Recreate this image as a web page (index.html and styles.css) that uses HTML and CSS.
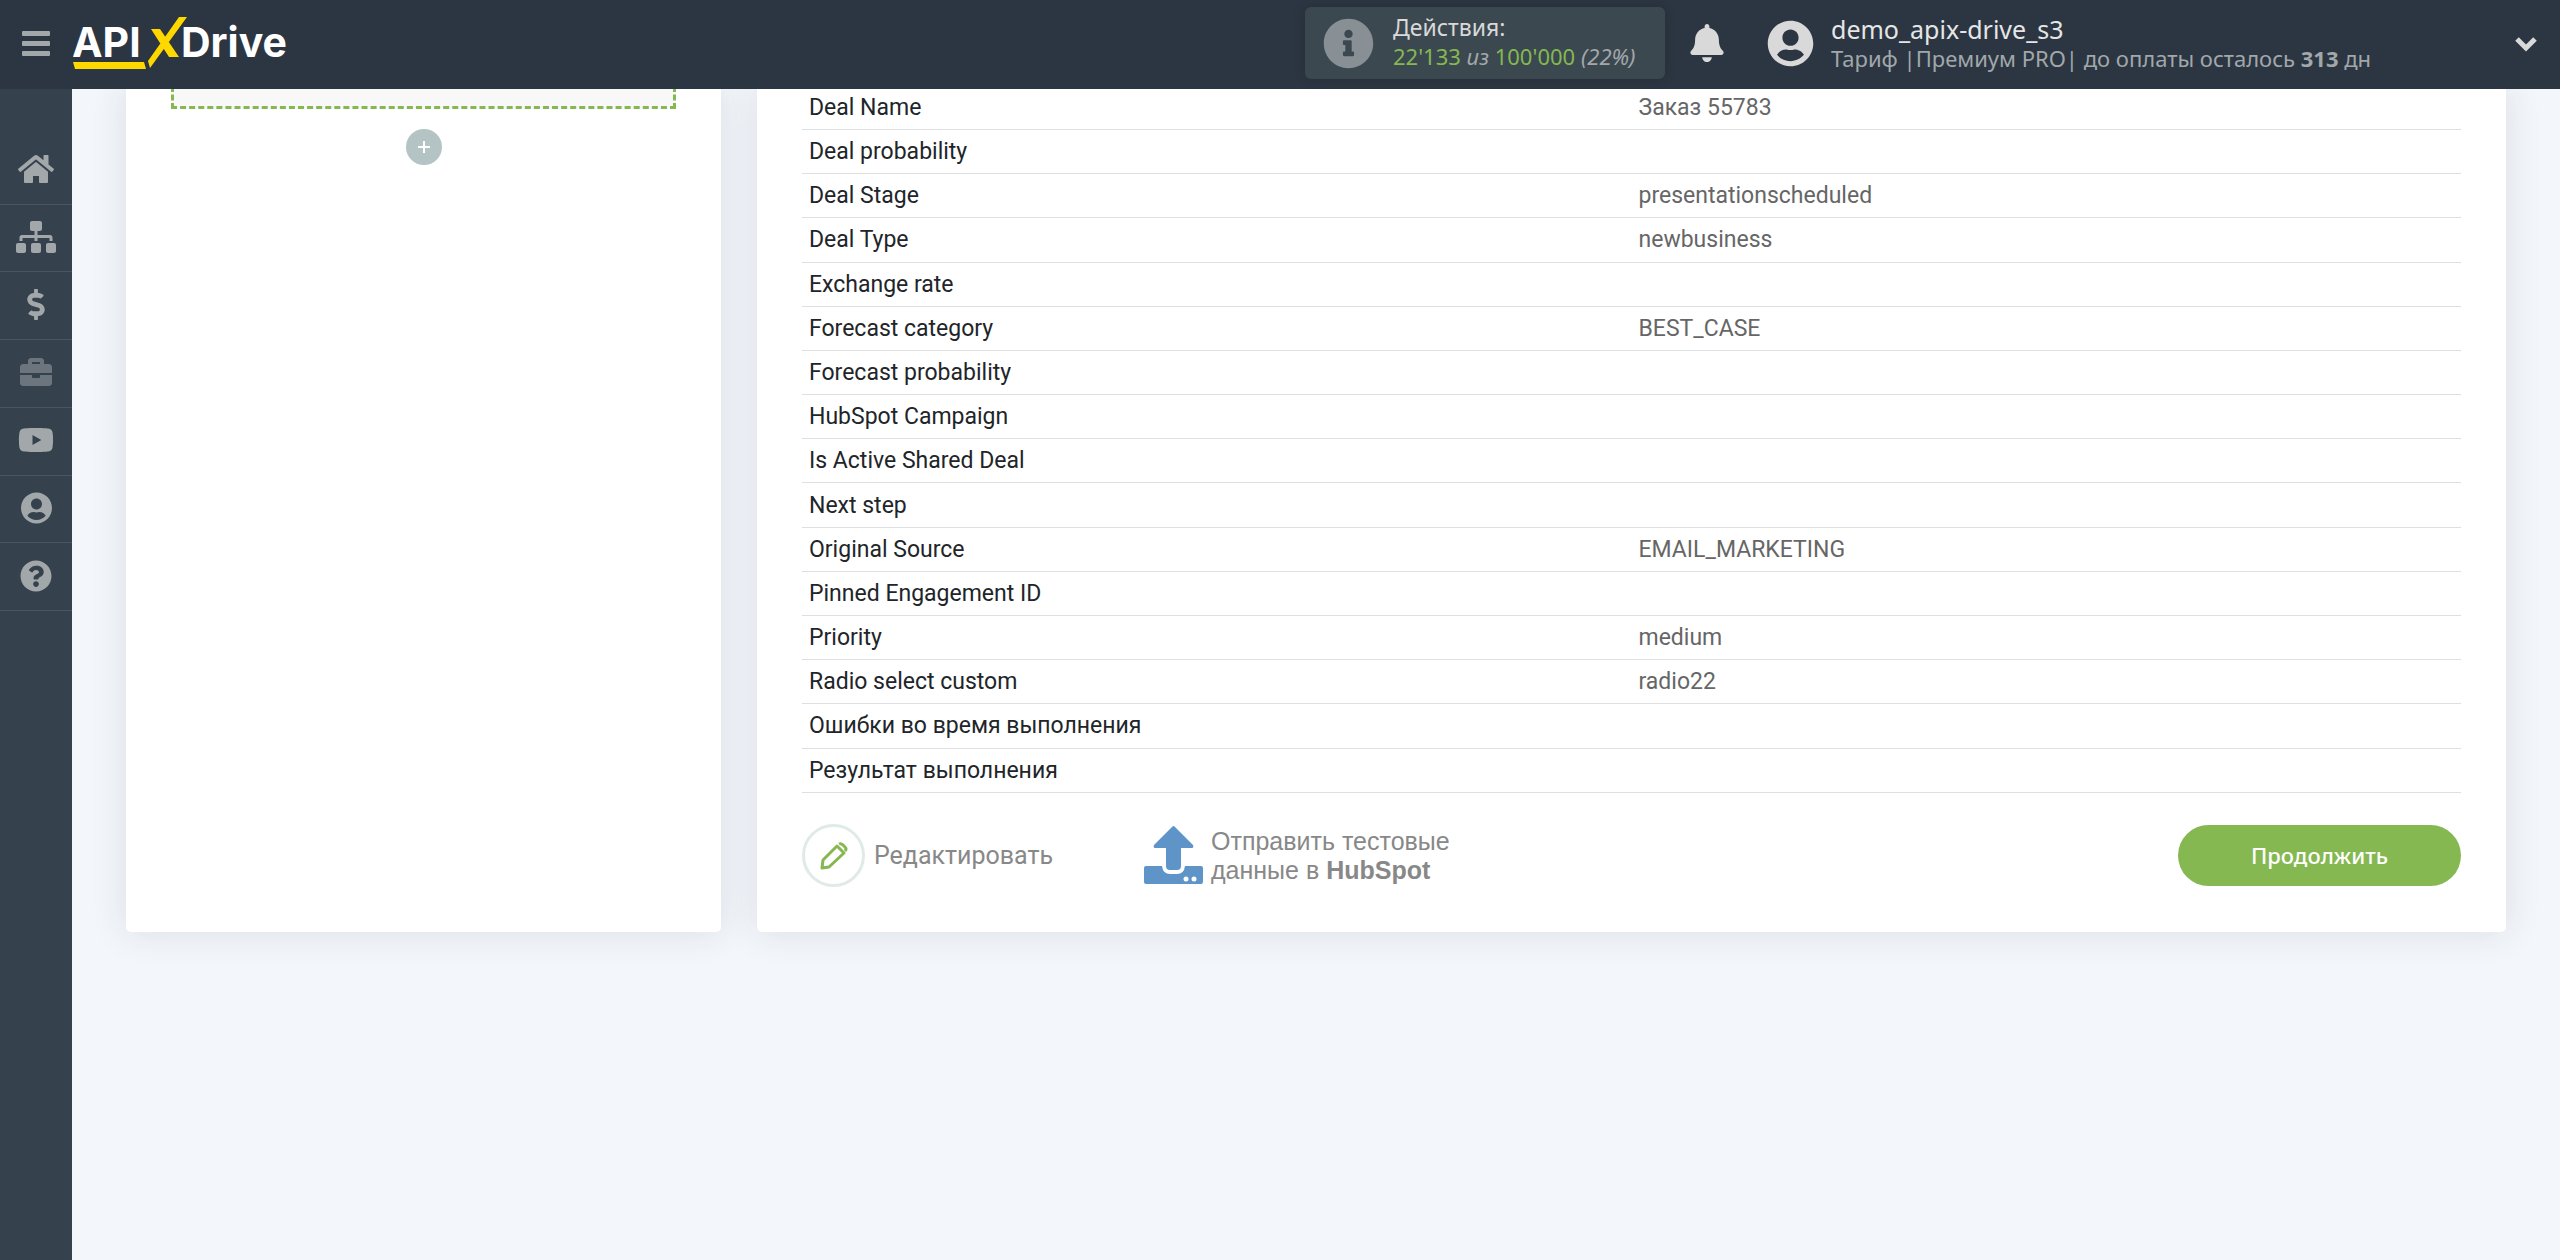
FILE: index.html
```html
<!DOCTYPE html>
<html lang="ru">
<head>
<meta charset="utf-8">
<meta name="viewport" content="width=device-width, initial-scale=1">
<title>ApiX-Drive</title>
<link rel="stylesheet" href="styles.css">
</head>
<body>
<header class="topbar">
  <button class="menu-btn" type="button" aria-label="Меню">
    <svg width="28" height="25" viewBox="0 0 28 25"><path d="M1 0h26a1 1 0 0 1 1 1v3a1 1 0 0 1-1 1H1a1 1 0 0 1-1-1V1a1 1 0 0 1 1-1zM1 10h26a1 1 0 0 1 1 1v3a1 1 0 0 1-1 1H1a1 1 0 0 1-1-1v-3a1 1 0 0 1 1-1zM1 20h26a1 1 0 0 1 1 1v3a1 1 0 0 1-1 1H1a1 1 0 0 1-1-1v-3a1 1 0 0 1 1-1z" fill="#a2a7aa"/></svg>
  </button>
  <a class="logo" href="#" aria-label="APIX Drive">
    <svg width="222" height="54" viewBox="0 0 222 54">
      <text class="logo-text" x="-1" y="41">API</text>
      <text class="logo-text" x="108" y="41">Drive</text>
      <path d="M0 46h71l2 7H2zM106 1h8L77 52l-2-7zM78 13h9l19 28h-10z" fill="#ffd800"/>
    </svg>
  </a>
  <section class="actions">
    <svg width="51" height="51" viewBox="0 0 512 512"><path fill="#889096" d="M256 8C119 8 8 119 8 256s111 248 248 248 248-111 248-248S393 8 256 8zm0 110c23.200 0 42 18.800 42 42s-18.800 42-42 42-42-18.800-42-42 18.800-42 42-42zm56 254c0 6.600-5.400 12-12 12h-88c-6.600 0-12-5.400-12-12v-24c0-6.600 5.400-12 12-12h12v-64h-12c-6.600 0-12-5.400-12-12v-24c0-6.600 5.400-12 12-12h64c6.600 0 12 5.400 12 12v100h12c6.600 0 12 5.400 12 12z"/></svg>
    <div class="actions-text">
      <div class="actions-title">Действия:</div>
      <div class="actions-count"><b>22'133</b> <i>из</i> <b>100'000</b> <i>(22%)</i></div>
    </div>
  </section>
  <button class="bell" type="button" aria-label="Уведомления">
    <svg width="34" height="38" viewBox="0 0 448 512"><path fill="#d9d9d9" d="M224 512c35.300 0 64-28.700 64-64H160c0 35.300 28.600 64 64 64zm215.400-149.700c-19.300-20.800-55.500-52-55.500-154.300 0-77.700-54.500-139.900-127.900-155.200V32c0-17.700-14.300-32-32-32s-32 14.300-32 32v20.800C118.600 68.100 64.100 130.300 64.100 208c0 102.300-36.200 133.500-55.500 154.300-6 6.500-8.700 14.200-8.600 21.700.1 16.400 13 32 32.100 32h383.800c19.100 0 32-15.600 32.100-32 .1-7.500-2.600-15.300-8.600-21.700z"/></svg>
  </button>
  <section class="account">
    <svg width="47" height="47" viewBox="0 0 496 512"><path fill="#d9d9d9" d="M248 8C111 8 0 119 0 256s111 248 248 248 248-111 248-248S385 8 248 8zm0 96c48.600 0 88 39.400 88 88s-39.400 88-88 88-88-39.400-88-88 39.400-88 88-88zm0 344c-58.700 0-111.300-26.600-146.500-68.200 18.800-35.400 55.600-59.800 98.500-59.800 2.400 0 4.800.4 7.100 1.100 13 4.200 26.600 6.900 40.900 6.900s28-2.700 40.900-6.900c2.300-.7 4.700-1.100 7.100-1.100 42.900 0 79.700 24.400 98.500 59.800C359.300 421.400 306.700 448 248 448z"/></svg>
    <div>
      <div class="account-name">demo_apix-drive_s3</div>
      <div class="account-plan">Тариф |Премиум PRO| до оплаты осталось <b>313</b> дн</div>
    </div>
  </section>
  <button class="expand" type="button" aria-label="Развернуть">
    <svg width="24" height="24" viewBox="0 0 24 24"><path d="M3 8l9 9 9-9" fill="none" stroke="#d9d9d9" stroke-width="5"/></svg>
  </button>
</header>
<div class="layout">
  <nav class="sidebar">
    <ul class="nav-list">
      <li><a href="#" aria-label="Главная"><svg width="36" height="32" viewBox="0 0 576 512"><path d="M280.400 148.300L96 300.100V464a16 16 0 0 0 16 16h112a16 16 0 0 0 16-16v-96h96v96a16 16 0 0 0 16 16h112a16 16 0 0 0 16-16V300L295.700 148.300a12.200 12.200 0 0 0-15.300 0zM571.600 251.500L488 182.600V44a12 12 0 0 0-12-12h-56a12 12 0 0 0-12 12v72.600L318.500 43a48 48 0 0 0-61 0L4.300 251.500a12 12 0 0 0-1.600 16.900l25.500 31a12 12 0 0 0 16.900 1.600L280.400 107.200a12.200 12.200 0 0 1 15.300 0l235.200 193.700a12 12 0 0 0 16.900-1.600l25.500-31a12 12 0 0 0-1.700-16.800z"/></svg></a></li>
      <li><a href="#" aria-label="Связи"><svg width="40" height="32" viewBox="0 0 640 512"><path d="M128 352H32c-17.700 0-32 14.300-32 32v96c0 17.700 14.300 32 32 32h96c17.700 0 32-14.300 32-32v-96c0-17.700-14.300-32-32-32zm-24-80h192v48h48v-48h192v48h48v-57.600c0-21.200-17.200-38.400-38.400-38.400H344v-64h40c17.700 0 32-14.300 32-32V32c0-17.700-14.300-32-32-32H256c-17.700 0-32 14.300-32 32v96c0 17.700 14.300 32 32 32h40v64H94.400C73.200 224 56 241.200 56 262.400V320h48v-48zm264 80h-96c-17.700 0-32 14.300-32 32v96c0 17.700 14.300 32 32 32h96c17.700 0 32-14.300 32-32v-96c0-17.700-14.300-32-32-32zm240 0h-96c-17.700 0-32 14.300-32 32v96c0 17.700 14.300 32 32 32h96c17.700 0 32-14.300 32-32v-96c0-17.700-14.300-32-32-32z"/></svg></a></li>
      <li><a href="#" aria-label="Оплата"><svg width="18" height="31" viewBox="0 0 288 512"><path d="M209.200 233.400l-108-31.600C88.700 198.200 80 186.500 80 173.500c0-16.300 13.200-29.500 29.500-29.500h66.300c12.200 0 24.200 3.700 34.200 10.500 6.100 4.100 14.300 3.100 19.500-2l34.800-34c7.100-6.900 6.100-18.400-1.800-24.500C238 74.800 207.400 64.100 176 64V16c0-8.800-7.200-16-16-16h-32c-8.800 0-16 7.200-16 16v48h-2.500C45.800 64-5.400 118.700.5 183.600c4.200 46.100 39.400 83.600 83.800 96.600l102.500 30c12.500 3.700 21.200 15.300 21.200 28.300 0 16.300-13.200 29.500-29.500 29.500h-66.300C100 368 88 364.300 78 357.500c-6.100-4.100-14.300-3.100-19.500 2l-34.800 34c-7.100 6.900-6.100 18.400 1.800 24.500 24.500 19.200 55.100 29.900 86.500 30v48c0 8.800 7.200 16 16 16h32c8.800 0 16-7.200 16-16v-48.200c46.600-.9 90.300-28.600 105.700-72.700 21.500-61.600-14.600-124.800-72.500-141.700z"/></svg></a></li>
      <li class="nav-dim"><a href="#" aria-label="Проекты"><svg width="32" height="32" viewBox="0 0 512 512"><path d="M320 336c0 8.800-7.200 16-16 16h-96c-8.800 0-16-7.200-16-16v-32H0v128c0 25.600 22.400 48 48 48h416c25.600 0 48-22.400 48-48V304H320v32zm144-208h-80V80c0-25.600-22.400-48-48-48H176c-25.600 0-48 22.400-48 48v48H48c-25.600 0-48 22.400-48 48v96h512v-96c0-25.600-22.400-48-48-48zm-144 0H192V96h128v32z"/></svg></a></li>
      <li><a href="#" aria-label="Видео"><svg width="36" height="32" viewBox="0 0 576 512"><path d="M549.700 124.100c-6.300-23.700-24.800-42.300-48.300-48.600C458.800 64 288 64 288 64S117.200 64 74.600 75.500c-23.500 6.300-42 24.900-48.300 48.600C14.900 167 14.900 256.400 14.900 256.400s0 89.400 11.400 132.300c6.300 23.700 24.800 41.500 48.300 47.800C117.200 448 288 448 288 448s170.800 0 213.400-11.500c23.500-6.300 42-24.200 48.300-47.800 11.400-42.900 11.400-132.300 11.400-132.300s0-89.400-11.400-132.300zM232 337V176l142 81z"/></svg></a></li>
      <li><a href="#" aria-label="Профиль"><svg width="31" height="32" viewBox="0 0 496 512"><path d="M248 8C111 8 0 119 0 256s111 248 248 248 248-111 248-248S385 8 248 8zm0 96c48.600 0 88 39.400 88 88s-39.400 88-88 88-88-39.400-88-88 39.400-88 88-88zm0 344c-58.700 0-111.300-26.600-146.500-68.200 18.800-35.400 55.600-59.800 98.500-59.800 2.400 0 4.800.4 7.100 1.100 13 4.200 26.600 6.900 40.900 6.900s28-2.700 40.900-6.900c2.300-.7 4.700-1.100 7.100-1.100 42.900 0 79.700 24.400 98.500 59.800C359.300 421.400 306.700 448 248 448z"/></svg></a></li>
      <li><a href="#" aria-label="Помощь"><svg width="32" height="32" viewBox="0 0 512 512"><path d="M504 256c0 137-111 248-248 248S8 393 8 256C8 119.100 119 8 256 8s248 111.100 248 248zM262.700 90c-54.500 0-89.300 23-116.500 63.800-3.500 5.300-2.400 12.400 2.700 16.300l34.700 26.300c5.200 3.900 12.600 3 16.700-2.100 17.900-22.700 30.100-35.800 57.300-35.800 20.400 0 45.700 13.100 45.700 33 0 15-12.400 22.700-32.500 34C247.100 238.500 216 255 216 296v4c0 6.600 5.400 12 12 12h56c6.600 0 12-5.400 12-12v-1.300c0-28.700 83.800-29.900 83.800-107.500 0-58.400-60.600-102.700-117.100-102.700zM256 338c-25.400 0-46 20.600-46 46s20.600 46 46 46 46-20.600 46-46-20.600-46-46-46z"/></svg></a></li>
    </ul>
  </nav>
  <main class="content">
    <section class="card steps">
      <div class="drop-zone"></div>
      <button class="add" type="button" aria-label="Добавить"><svg width="12" height="12" viewBox="0 0 12 12"><path d="M6 0v12M0 6h12" stroke="#fff" stroke-width="2"/></svg></button>
    </section>
    <section class="card details">
      <table class="fields">
        <tbody>
          <tr><th scope="row">Deal Name</th><td>Заказ 55783</td></tr>
          <tr><th scope="row">Deal probability</th><td></td></tr>
          <tr><th scope="row">Deal Stage</th><td>presentationscheduled</td></tr>
          <tr><th scope="row">Deal Type</th><td>newbusiness</td></tr>
          <tr><th scope="row">Exchange rate</th><td></td></tr>
          <tr><th scope="row">Forecast category</th><td>BEST_CASE</td></tr>
          <tr><th scope="row">Forecast probability</th><td></td></tr>
          <tr><th scope="row">HubSpot Campaign</th><td></td></tr>
          <tr><th scope="row">Is Active Shared Deal</th><td></td></tr>
          <tr><th scope="row">Next step</th><td></td></tr>
          <tr><th scope="row">Original Source</th><td>EMAIL_MARKETING</td></tr>
          <tr><th scope="row">Pinned Engagement ID</th><td></td></tr>
          <tr><th scope="row">Priority</th><td>medium</td></tr>
          <tr><th scope="row">Radio select custom</th><td>radio22</td></tr>
          <tr><th scope="row">Ошибки во время выполнения</th><td></td></tr>
          <tr><th scope="row">Результат выполнения</th><td></td></tr>
        </tbody>
      </table>
      <div class="card-footer">
        <button class="edit" type="button">
          <span class="edit-icon"><svg width="28" height="28" viewBox="0 0 28 28"><path d="M2 26l1-8L17 4l7 7L9 25zM19 2q2-1 4 1l2 2q2 2 0 4" fill="none" stroke="#85b850" stroke-width="3" stroke-linejoin="round"/></svg></span>
          <span>Редактировать</span>
        </button>
        <button class="send" type="button">
          <svg width="59" height="59" viewBox="0 0 59 59"><path d="M29 0q1 0 2 1l18 18q1 3-1 3H37v18q0 4-4 4h-7q-4 0-4-4V22H11q-2 0-1-3L28 1z" fill="#5e94c8"/><path d="M2 40h16q1 8 8 8h7q7 0 8-8h16q2 0 2 2v14q0 2-2 2H2q-2 0-2-2V42q0-2 2-2z" fill="#5e94c8"/><circle cx="42" cy="53" r="2.500" fill="#fff"/><circle cx="50" cy="53" r="2.500" fill="#fff"/></svg>
          <span>Отправить тестовые<br>данные в <b>HubSpot</b></span>
        </button>
        <button class="continue" type="button">Продолжить</button>
      </div>
    </section>
  </main>
</div>
</body>
</html>
```
FILE: styles.css
```css
* { box-sizing: border-box; }
body {
  margin: 0;
  min-height: 100vh;
  display: flex;
  flex-direction: column;
  background: #f3f6fb;
  font-family: Roboto, "Noto Sans", sans-serif;
}
svg { display: block; flex: none; }
button {
  padding: 0;
  border: 0;
  background: none;
  font: inherit;
  color: inherit;
  cursor: pointer;
}

.topbar {
  position: sticky;
  top: 0;
  z-index: 2;
  display: flex;
  align-items: center;
  height: 89px;
  padding: 0 22px 3px;
  background: #2b3642;
  font-family: "Noto Sans", sans-serif;
}
.menu-btn { margin-right: 23px; }
.logo-text {
  fill: #fff;
  font-family: Inter, sans-serif;
  font-size: 41px;
  font-weight: 700;
}
.actions {
  display: flex;
  align-items: center;
  gap: 19px;
  width: 360px;
  height: 72px;
  margin: 0 25px 0 auto;
  padding: 0 18px;
  border-radius: 6px;
  background: #3c4850;
  box-shadow: 0 0 12px rgba(0, 0, 0, 0.15);
}
.actions-text { padding-bottom: 2px; }
.actions-title { color: #d9d9d9; font-size: 23px; line-height: 28px; }
.actions-count { color: #a2a7aa; font-size: 22px; line-height: 30px; }
.actions-count b { color: #85b850; font-weight: 400; }
.bell { margin-right: 43px; }
.account {
  display: flex;
  align-items: center;
  gap: 17px;
  width: 747px;
}
.account-name { color: #e6e6e6; font-size: 25px; line-height: 30px; }
.account-plan { color: #a2a7aa; font-size: 22px; line-height: 28px; }

.layout { flex: 1; display: flex; }
.sidebar { flex: none; width: 72px; padding-top: 48px; background: #36414e; }
.nav-list {
  display: grid;
  grid-auto-rows: 1fr;
  height: 474px;
  margin: 0;
  padding: 0;
  list-style: none;
}
.nav-list li { border-bottom: 1px solid #4b5661; }
.nav-list a {
  display: flex;
  align-items: center;
  justify-content: center;
  height: 100%;
  padding-bottom: 2px;
}
.nav-list path { fill: #a2a7aa; }
.nav-list .nav-dim path { fill: #6c757e; }

.content {
  flex: 1;
  display: flex;
  align-items: stretch;
  align-self: flex-start;
  gap: 36px;
  margin-top: -3px;
  padding: 0 54px 40px;
}
.card {
  padding: 0 45px;
  border-radius: 0 0 5px 5px;
  background: #fff;
  box-shadow: 0 0 36px rgba(43, 54, 66, 0.12);
}
.steps {
  flex: 0 0 25%;
  display: flex;
  flex-direction: column;
  align-items: center;
  gap: 20px;
}
.drop-zone {
  width: 100%;
  height: 23px;
  border: 3px dashed #85b850;
  border-top: 0;
  background: #f8f8f8;
}
.add {
  display: flex;
  align-items: center;
  justify-content: center;
  width: 36px;
  height: 36px;
  border-radius: 50%;
  background: #b4c3c4;
}
.details { flex: 1; }
.fields {
  width: 100%;
  height: 707px;
  border-collapse: collapse;
  table-layout: fixed;
  font-size: 23px;
  line-height: 28px;
}
.fields th, .fields td {
  padding: 1px 7px 0;
  border-bottom: 1px solid #dedfe1;
  text-align: left;
  font-weight: 400;
}
.fields th { color: #212529; }
.fields td { color: #666; }
.card-footer {
  display: flex;
  align-items: center;
  padding: 31px 0 45px;
  color: #888;
  font-size: 25px;
  line-height: 29px;
}
.edit { display: flex; align-items: center; gap: 9px; width: 342px; }
.edit-icon {
  display: flex;
  align-items: center;
  justify-content: center;
  width: 63px;
  height: 63px;
  border: 3px solid #e0eae9;
  border-radius: 50%;
}
.send {
  display: flex;
  align-items: center;
  gap: 8px;
  font-family: "Liberation Sans", Arial, sans-serif;
  text-align: left;
}
.continue {
  width: 283px;
  height: 61px;
  margin-left: auto;
  border-radius: 31px;
  background: #85b850;
  color: #fff;
  font-family: "Noto Sans", sans-serif;
  font-size: 22px;
  font-weight: 500;
}
```
